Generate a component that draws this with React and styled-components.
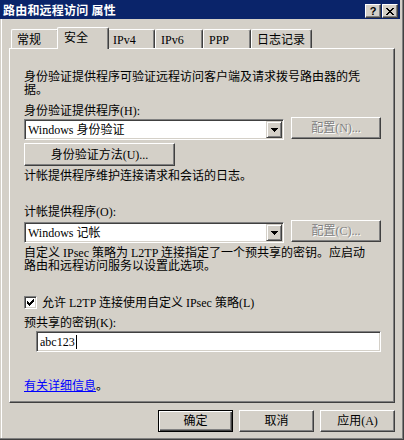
import styled, { createGlobalStyle } from "styled-components";

const FONT = `"Liberation Serif", "Noto Sans CJK SC", serif`;
const FACE = "#d4d0c8";
const SHADOW = "#808080";
const DARK = "#404040";

const Global = createGlobalStyle`
  html, body {
    margin: 0;
    padding: 0;
    background: ${FACE};
  }
  body {
    font-family: ${FONT};
    font-size: 12px;
    line-height: 12px;
    color: #000;
  }
`;

const Window = styled.div`
  width: 404px;
  height: 440px;
  box-sizing: border-box;
  background: ${FACE};
  border-right: 1px solid ${DARK};
  border-bottom: 1px solid ${DARK};
  box-shadow: inset -1px -1px ${SHADOW}, inset 1px 0 ${FACE}, inset 2px 0 #fff;
  display: flex;
  flex-direction: column;
`;

const TitleBar = styled.div`
  height: 19px;
  margin-right: 3px;
  background: #0a246a;
  display: flex;
  align-items: flex-start;
  padding: 0 2px 0 3px;
`;

const Title = styled.div`
  flex: 1;
  color: #fff;
  font-weight: bold;
  padding-top: 5px;
  letter-spacing: 0.2px;
`;

const CaptionButtons = styled.div`
  display: flex;
  gap: 1px;
  padding-top: 4px;
`;

const CaptionButton = styled.div`
  width: 16px;
  height: 14px;
  box-sizing: border-box;
  background: ${FACE};
  border: 1px solid;
  border-color: #fff ${DARK} ${DARK} #fff;
  box-shadow: inset -1px -1px ${SHADOW};
  display: flex;
  align-items: center;
  justify-content: center;
  font: bold 11px "Liberation Sans", sans-serif;
  line-height: 11px;
`;

const Body = styled.div`
  padding: 8px 8px 0 9px;
  display: flex;
  flex-direction: column;
`;

const TabStrip = styled.div`
  display: flex;
  align-items: flex-end;
  height: 21px;
  margin-left: 2px;
`;

const Tab = styled.div`
  box-sizing: border-box;
  min-width: ${(p) => (p.$active ? 52 : 48)}px;
  height: ${(p) => (p.$active ? 22 : 19)}px;
  margin: 0 ${(p) => (p.$active ? -2 : 0)}px ${(p) => (p.$active ? -1 : 0)}px;
  padding: 4px 6px 0 ${(p) => (p.$active ? 6 : 5)}px;
  background: ${FACE};
  border-top: 1px solid #fff;
  border-left: 1px solid #fff;
  border-right: 1px solid ${DARK};
  box-shadow: inset -1px 0 ${SHADOW};
  border-radius: 2px 2px 0 0;
  position: relative;
  z-index: ${(p) => (p.$active ? 1 : 0)};
  white-space: nowrap;
`;

const Panel = styled.div`
  box-sizing: border-box;
  height: 355px;
  border: 1px solid;
  border-color: #fff ${DARK} ${DARK} #fff;
  box-shadow: inset -1px -1px ${SHADOW};
  padding: 22px 13px 0 14px;
  display: flex;
  flex-direction: column;
  align-items: flex-start;
`;

const Text = styled.div`
  margin-top: ${(p) => p.$top || 0}px;
  white-space: nowrap;
`;

const Paragraph = styled.div`
  margin-top: ${(p) => p.$top || 0}px;
  white-space: nowrap;
  line-height: 13px;
`;

const Row = styled.div`
  align-self: stretch;
  display: flex;
  justify-content: space-between;
  align-items: flex-start;
  margin-top: ${(p) => p.$top || 0}px;
`;

const Combo = styled.div`
  box-sizing: border-box;
  width: 260px;
  height: 21px;
  margin-top: 2px;
  background: #fff;
  border: 1px solid;
  border-color: ${SHADOW} #fff #fff ${SHADOW};
  box-shadow: inset 1px 1px ${DARK}, inset -1px -1px ${FACE};
  padding: 1px 1px 1px 3px;
  display: flex;
  align-items: center;
`;

const ComboValue = styled.div`
  flex: 1;
  white-space: nowrap;
`;

const DropButton = styled.div`
  box-sizing: border-box;
  width: 16px;
  height: 17px;
  background: ${FACE};
  border: 1px solid;
  border-color: ${FACE} ${DARK} ${DARK} ${FACE};
  box-shadow: inset 1px 1px #fff, inset -1px -1px ${SHADOW};
  display: flex;
  align-items: center;
  justify-content: center;
`;

const Button = styled.div`
  box-sizing: border-box;
  width: ${(p) => p.$w}px;
  height: ${(p) => p.$h || 22}px;
  margin-top: ${(p) => p.$top || 0}px;
  background: ${FACE};
  border: 1px solid;
  border-color: ${(p) => (p.$default ? "#000" : `#fff ${DARK} ${DARK} #fff`)};
  box-shadow: ${(p) =>
    p.$default
      ? `inset 1px 1px #fff, inset -1px -1px ${DARK}, inset -2px -2px ${SHADOW}`
      : `inset -1px -1px ${SHADOW}`};
  display: flex;
  align-items: center;
  justify-content: center;
  white-space: nowrap;
  color: ${(p) => (p.$disabled ? SHADOW : "#000")};
  text-shadow: ${(p) => (p.$disabled ? "1px 1px #fff" : "none")};
`;

const CheckRow = styled.div`
  display: flex;
  align-items: center;
  gap: 5px;
  margin-top: ${(p) => p.$top || 0}px;
`;

const CheckBox = styled.div`
  box-sizing: border-box;
  width: 13px;
  height: 13px;
  background: #fff;
  border: 1px solid;
  border-color: ${SHADOW} #fff #fff ${SHADOW};
  box-shadow: inset 1px 1px ${DARK}, inset -1px -1px ${FACE};
  display: flex;
  align-items: center;
  justify-content: center;
`;

const Field = styled.div`
  box-sizing: border-box;
  align-self: stretch;
  height: 21px;
  margin: 2px 0 0 12px;
  background: #fff;
  border: 1px solid;
  border-color: ${SHADOW} #fff #fff ${SHADOW};
  box-shadow: inset 1px 1px ${DARK}, inset -1px -1px ${FACE};
  padding: 0 3px;
  display: flex;
  align-items: center;
`;

const Caret = styled.span`
  display: inline-block;
  width: 1px;
  height: 14px;
  background: #000;
  margin-left: 1px;
`;

const Link = styled.span`
  color: #0000ff;
  text-decoration: underline;
`;

const Footer = styled.div`
  display: flex;
  justify-content: flex-end;
  gap: 6px;
  margin-top: 7px;
`;

const Pixels = ({ rows, color = "#000" }) => (
  <svg
    width={rows[0].length}
    height={rows.length}
    viewBox={`0 0 ${rows[0].length} ${rows.length}`}
    shapeRendering="crispEdges"
  >
    {rows.flatMap((r, y) =>
      r.split("").map((c, x) =>
        c === "X" ? <rect key={`${x}-${y}`} x={x} y={y} width="1" height="1" fill={color} /> : null
      )
    )}
  </svg>
);

const CLOSE = [
  "XX....XX",
  ".XX..XX.",
  "..XXXX..",
  "...XX...",
  "..XXXX..",
  ".XX..XX.",
  "XX....XX",
];

const ARROW = ["XXXXXXX", ".XXXXX.", "..XXX..", "...X..."];

const CHECK = [
  "......X",
  ".....XX",
  "X...XXX",
  "XX.XXX.",
  "XXXXX..",
  ".XXX...",
  "..X....",
];

const tabs = ["常规", "安全", "IPv4", "IPv6", "PPP", "日志记录"];

const Select = ({ value }) => (
  <Combo>
    <ComboValue>{value}</ComboValue>
    <DropButton>
      <Pixels rows={ARROW} />
    </DropButton>
  </Combo>
);

export default function App() {
  return (
    <>
      <Global />
      <Window>
        <TitleBar>
          <Title>路由和远程访问 属性</Title>
          <CaptionButtons>
            <CaptionButton>?</CaptionButton>
            <CaptionButton>
              <Pixels rows={CLOSE} />
            </CaptionButton>
          </CaptionButtons>
        </TitleBar>
        <Body>
          <TabStrip>
            {tabs.map((t) => (
              <Tab key={t} $active={t === "安全"}>
                {t}
              </Tab>
            ))}
          </TabStrip>
          <Panel>
            <Paragraph>
              身份验证提供程序可验证远程访问客户端及请求拨号路由器的凭
              <br />
              据。
            </Paragraph>
            <Text $top={8}>身份验证提供程序(H):</Text>
            <Row>
              <Select value="Windows 身份验证" />
              <Button $w={90} $disabled>
                配置(N)...
              </Button>
            </Row>
            <Button $w={151} $h={23} $top={3}>
              身份验证方法(U)...
            </Button>
            <Text $top={4}>计帐提供程序维护连接请求和会话的日志。</Text>
            <Text $top={24}>计帐提供程序(O):</Text>
            <Row $top={2}>
              <Select value="Windows 记帐" />
              <Button $w={90} $disabled>
                配置(C)...
              </Button>
            </Row>
            <Paragraph $top={4}>
              自定义 IPsec 策略为 L2TP 连接指定了一个预共享的密钥。应启动
              <br />
              路由和远程访问服务以设置此选项。
            </Paragraph>
            <CheckRow $top={23}>
              <CheckBox>
                <Pixels rows={CHECK} />
              </CheckBox>
              允许 L2TP 连接使用自定义 IPsec 策略(L)
            </CheckRow>
            <Text $top={8}>预共享的密钥(K):</Text>
            <Field>
              abc123
              <Caret />
            </Field>
            <Text $top={28}>
              <Link>有关详细信息</Link>。
            </Text>
          </Panel>
          <Footer>
            <Button $w={75} $default>
              确定
            </Button>
            <Button $w={75}>取消</Button>
            <Button $w={75}>应用(A)</Button>
          </Footer>
        </Body>
      </Window>
    </>
  );
}
